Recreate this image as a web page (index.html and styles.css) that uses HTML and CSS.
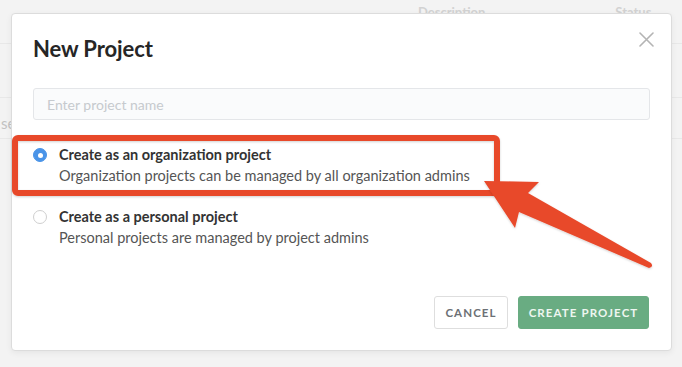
FILE: index.html
```html
<!DOCTYPE html>
<html lang="en">
<head>
    <meta charset="UTF-8" />
    <title>New Project</title>
    <link rel="stylesheet" href="styles.css">
</head>
<body>

    <!-- page behind the dialog -->
    <div class="page">
        <div class="page-head">
            <span class="col-desc">Description</span>
            <span class="col-status">Status</span>
        </div>
        <div class="page-row"></div>
        <div class="page-row page-row-text"><span>se</span></div>
    </div>

    <!-- dialog -->
    <div class="modal">
        <div class="modal-head">
            <h2 class="modal-title">New Project</h2>
            <button class="close-btn" aria-label="Close">
                <svg width="15" height="15" viewBox="0 0 15 15">
                    <path d="M1 1 L14 14 M14 1 L1 14" stroke="#b4b4b4" stroke-width="1.6" fill="none" stroke-linecap="round"/>
                </svg>
            </button>
        </div>

        <input class="name-input" type="text" placeholder="Enter project name">

        <div class="options">
            <label class="option">
                <span class="radio radio-checked"></span>
                <span class="option-text">
                    <span class="option-label">Create as an organization project</span>
                    <span class="option-desc">Organization projects can be managed by all organization admins</span>
                </span>
            </label>
            <label class="option">
                <span class="radio"></span>
                <span class="option-text">
                    <span class="option-label">Create as a personal project</span>
                    <span class="option-desc">Personal projects are managed by project admins</span>
                </span>
            </label>
        </div>

        <div class="actions">
            <button class="btn btn-cancel">CANCEL</button>
            <button class="btn btn-create">CREATE PROJECT</button>
        </div>
    </div>

    <!-- annotation drawn over the screenshot -->
    <svg class="callout" width="682" height="367" viewBox="0 0 682 367">
        <defs>
            <filter id="soft" x="-10%" y="-10%" width="120%" height="130%">
                <feDropShadow dx="0" dy="1" stdDeviation="1" flood-color="#000" flood-opacity="0.18"/>
            </filter>
        </defs>
        <rect x="15" y="138" width="482" height="55" rx="3" fill="none" stroke="#e8492b" stroke-width="6" filter="url(#soft)"/>
        <path d="M484 181 L539 182 L528 193 L651 263 Q654 267 649 268 L519 212 L515 228 Z" fill="#e8492b" filter="url(#soft)"/>
    </svg>

</body>
</html>
```

FILE: styles.css
```css
/* base */
html, body {
    margin: 0;
    padding: 0;
    height: 100%;
    overflow: hidden;
}

body {
    background: #f3f3f3;
    font-family: Lato, "Open Sans", sans-serif;
    color: #333;
}

/* page behind the dialog */
.page {
    height: 100%;
}

.page-head {
    height: 43px;
    border-bottom: 1px solid #e8e8e8;
    display: flex;
    font-size: 13px;
    color: #d2d2d2;
    font-weight: 700;
}

.col-desc {
    margin-left: 418px;
    margin-top: 4px;
}

.col-status {
    margin-left: 130px;
    margin-top: 4px;
}

.page-row {
    height: 53px;
    border-bottom: 1px solid #e8e8e8;
}

.page-row-text {
    height: 40px;
    font-size: 15px;
    color: #c2c2c2;
    display: flex;
    align-items: flex-start;
    padding-left: 1px;
}

.page-row-text span {
    margin-top: 16px;
}

/* dialog */
.modal {
    position: absolute;
    top: 13px;
    left: 11px;
    width: 661px;
    height: 338px;
    box-sizing: border-box;
    background: #fff;
    border: 1px solid #dcdcdc;
    border-radius: 4px;
    box-shadow: 0 2px 6px rgba(0, 0, 0, 0.06);
    padding: 21px;
    display: flex;
    flex-direction: column;
}

.modal-head {
    display: flex;
    justify-content: space-between;
    align-items: flex-start;
}

.modal-title {
    margin: 0;
    font-size: 22px;
    line-height: 28px;
    font-weight: 700;
    color: #262626;
    letter-spacing: -0.1px;
}

.close-btn {
    border: none;
    background: none;
    padding: 0;
    margin: -3px -4px 0 0;
    width: 15px;
    height: 15px;
    cursor: pointer;
}

.name-input {
    margin-top: 25px;
    height: 32px;
    box-sizing: border-box;
    width: 617px;
    border: 1px solid #e4e6e9;
    border-radius: 3px;
    background: #fafbfc;
    padding: 0 13px;
    font-family: Lato, sans-serif;
    font-size: 14px;
    color: #333;
    outline: none;
}

.name-input::placeholder {
    color: #c6cace;
}

.options {
    margin-top: 25px;
    display: flex;
    flex-direction: column;
    gap: 21px;
}

.option {
    display: flex;
    align-items: flex-start;
    cursor: pointer;
}

.radio {
    width: 14px;
    height: 14px;
    box-sizing: border-box;
    border-radius: 50%;
    border: 1px solid #cfcfcf;
    background: #fff;
    margin-top: 3px;
    flex: none;
    display: flex;
    align-items: center;
    justify-content: center;
}

.radio-checked {
    background: #4a94e8;
    border-color: #4a94e8;
}

.radio-checked::after {
    content: "";
    width: 5px;
    height: 5px;
    border-radius: 50%;
    background: #fff;
}

.option-text {
    margin-left: 12px;
    display: flex;
    flex-direction: column;
    font-size: 14.5px;
    line-height: 20.5px;
}

.option-label {
    font-weight: 700;
    color: #333;
}

.option-desc {
    color: #555;
}

/* buttons */
.actions {
    margin-top: auto;
    display: flex;
    justify-content: flex-end;
    gap: 10px;
    margin-right: 1px;
}

.btn {
    height: 33px;
    border-radius: 3px;
    font-family: Lato, sans-serif;
    font-size: 11.5px;
    font-weight: 700;
    letter-spacing: 1.1px;
    padding: 0;
    white-space: nowrap;
    cursor: pointer;
}

.btn-cancel {
    width: 74px;
    background: #fff;
    border: 1px solid #dedede;
    color: #6c7075;
}

.btn-create {
    width: 131px;
    background: #69ac82;
    border: 1px solid #69ac82;
    color: #eef6f0;
}

/* annotation overlay */
.callout {
    position: absolute;
    top: 0;
    left: 0;
    pointer-events: none;
}
```
